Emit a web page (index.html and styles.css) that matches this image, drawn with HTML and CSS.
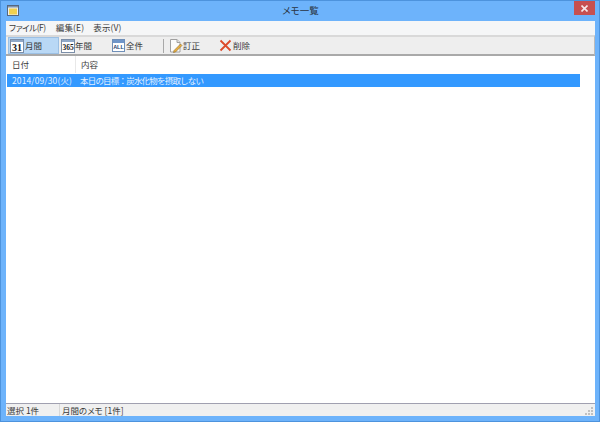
FILE: index.html
```html
<!DOCTYPE html>
<html lang="ja">
<head>
<meta charset="utf-8">
<title>メモ一覧</title>
<link rel="stylesheet" href="styles.css">
</head>
<body>
<div class="window">
  <header class="titlebar">
    <svg class="appicon" width="12" height="12" viewBox="0 0 12 12"><rect x="0.5" y="0.5" width="11" height="10" fill="#eef0f2" stroke="#56677e"/><rect x="2" y="3.5" width="8" height="6" fill="#f0d050"/><rect x="1" y="1" width="10" height="1.5" fill="#7f93ad"/></svg>
    <div class="title">メモ一覧</div>
    <div class="close"><svg width="7" height="7" viewBox="0 0 7 7"><path d="M.5 .5L6.5 6.5M6.5 .5L.5 6.5" stroke="#f6e8e8" stroke-width="1.6"/></svg></div>
  </header>
  <div class="client">
    <nav class="menubar">
      <span class="menu menu-kana">ファイル(F)</span>
      <span class="menu">編集(E)</span>
      <span class="menu">表示(V)</span>
    </nav>
    <div class="toolbar">
      <div class="tool tool-active tool-w1">
        <svg width="14" height="14" viewBox="0 0 14 14"><rect x=".5" y=".5" width="13" height="13" fill="#fff" stroke="#7b8ea8"/><rect x="1" y="1" width="12" height="2" fill="#8fa8c8"/><text x="7" y="12" class="cal-big">31</text></svg>
        <span class="tool-label">月間</span>
      </div>
      <div class="tool tool-w2">
        <svg width="14" height="14" viewBox="0 0 14 14"><rect x=".5" y=".5" width="13" height="13" fill="#fff" stroke="#7b8ea8"/><rect x="1" y="1" width="12" height="2" fill="#8fa8c8"/><text x="7" y="11" class="cal-mid">365</text></svg>
        <span class="tool-label">年間</span>
      </div>
      <div class="tool tool-w3">
        <svg width="13" height="13" viewBox="0 0 13 13"><rect x=".5" y=".5" width="12" height="12" fill="#fff" stroke="#6f8fb8"/><rect x="1" y="1" width="11" height="3" fill="#6f95c8"/><text x="6.5" y="10" class="cal-small">ALL</text></svg>
        <span class="tool-label">全件</span>
      </div>
      <div class="sep"></div>
      <div class="tool tool-w4">
        <svg width="14" height="14" viewBox="0 0 14 14"><path d="M1.5 .5H8L11 3.5V13H1.5Z" fill="#fbfbfb" stroke="#a0a0a0"/><path d="M8 .5V3.5H11" fill="#e4e4e4" stroke="#a0a0a0"/><path d="M5 11.5L11.5 5L13 6.5L6.5 13L4.5 13.5Z" fill="#e8b040" stroke="#7a5a20" stroke-width=".5"/></svg>
        <span class="tool-label">訂正</span>
      </div>
      <div class="tool tool-w5">
        <svg width="13" height="13" viewBox="0 0 13 13"><path d="M1.5 1.5L11.5 11.5M11.5 1.5L1.5 11.5" stroke="#dd4a2a" stroke-width="1.8"/></svg>
        <span class="tool-label">削除</span>
      </div>
    </div>
    <main class="list">
      <div class="list-head">
        <div class="col-date head-cell">日付</div>
        <div class="col-body head-cell">内容</div>
      </div>
      <div class="row">
        <div class="col-date date-text">2014/09/30(火)</div>
        <div class="col-body body-text">本日の目標：炭水化物を摂取しない</div>
      </div>
    </main>
    <footer class="status">
      <div class="st-a">選択 1件</div>
      <div class="st-b">月間のメモ [1件]</div>
      <svg class="grip" width="9" height="9" viewBox="0 0 9 9"><path d="M6 0h2v2H6zM3 3h2v2H3zM6 3h2v2H6zM0 6h2v2H0zM3 6h2v2H3zM6 6h2v2H6z" fill="#c0c0c0"/></svg>
    </footer>
  </div>
</div>
</body>
</html>
```
FILE: styles.css
```css
* { box-sizing: border-box; }
html, body { margin: 0; padding: 0; }
body {
  width: 600px;
  height: 422px;
  overflow: hidden;
  font-family: "Noto Sans CJK JP", "Noto Sans", sans-serif;
  font-size: 8.5px;
  font-feature-settings: "palt";
  color: #3a3a3a;
}
.window {
  width: 600px;
  height: 422px;
  display: flex;
  flex-direction: column;
  background: #6db3fb;
  border: 1px solid #4d93dd;
  padding: 0 4px 5px 5px;
}
.titlebar {
  height: 20px;
  flex: none;
  display: flex;
  align-items: center;
  position: relative;
}
.appicon { margin: 0 0 0 1px; }
.title {
  position: absolute;
  left: 0;
  right: 0;
  top: 2px;
  text-align: center;
  font-size: 9.5px;
  line-height: 14px;
  color: #2a3442;
}
.close {
  position: absolute;
  right: 0;
  top: 0;
  width: 21px;
  height: 14px;
  background: #c75050;
  display: flex;
  align-items: center;
  justify-content: center;
}
.client {
  flex: 1;
  min-height: 0;
  display: flex;
  flex-direction: column;
  background: #f0f0f0;
}
.menubar {
  height: 14px;
  flex: none;
  display: flex;
  align-items: flex-start;
  background: #f5f6f7;
  padding-left: 3px;
  gap: 9px;
  line-height: 12px;
}
.menu { letter-spacing: 0.15px; }
.menu-kana { letter-spacing: -0.45px; margin-right: 1px; }
.toolbar {
  height: 21px;
  flex: none;
  display: flex;
  align-items: center;
  background: #eeeeee;
  border-top: 2px solid #d9d9d9;
  border-bottom: 2px solid #a9a9a9;
  border-right: 1px solid #bbb;
  padding-left: 2px;
}
.tool {
  height: 17px;
  display: flex;
  align-items: center;
  gap: 1px;
  padding-left: 2px;
  line-height: 14px;
}
.tool-label { margin-bottom: 2px; }
.tool-w1 { width: 51px; }
.tool-w2 { width: 51px; gap: 0; }
.tool-w3 { width: 52px; gap: 1px; }
.tool-w4 { width: 48px; padding-left: 0; gap: 0; }
.tool-w5 { width: 50px; gap: 1px; }
.tool-active { background: #b9d8f5; border: 1px solid #9cc0e4; padding-left: 1px; }
.sep { width: 1px; height: 14px; background: #a8a8a8; margin: 0 5px 0 1px; }
.cal-big { font: bold 10px "Liberation Serif", serif; text-anchor: middle; fill: #1a1a1a; }
.cal-mid { font: bold 7.5px "Liberation Serif", serif; text-anchor: middle; fill: #1a1a1a; }
.cal-small { font: bold 5.5px "Liberation Sans", sans-serif; text-anchor: middle; fill: #23436f; }
.list {
  flex: 1;
  min-height: 0;
  background: #fff;
  border-bottom: 1px solid #a0a0b0;
  padding-left: 1px;
}
.list-head {
  display: flex;
  height: 17px;
  width: 573px;
  line-height: 16px;
}
.head-cell.col-body { border-left: 1px solid #e8e8e8; }
.col-date { width: 68px; flex: none; padding-left: 5px; }
.col-body { flex: 1; padding-left: 5px; }
.date-text { letter-spacing: 0.1px; }
.body-text { font-feature-settings: normal; letter-spacing: -0.8px; }
.row {
  display: flex;
  width: 573px;
  height: 13px;
  margin-top: 1px;
  line-height: 12px;
  background: #3399ff;
  color: #e3f0ff;
}
.status {
  height: 12px;
  flex: none;
  display: flex;
  align-items: center;
  position: relative;
  background: #f0f0f0;
  line-height: 12px;
}
.st-a { width: 54px; padding-left: 1px; border-right: 1px solid #d8d8d8; }
.st-b { padding-left: 2px; }
.grip { position: absolute; right: 1px; bottom: 0; }
```
